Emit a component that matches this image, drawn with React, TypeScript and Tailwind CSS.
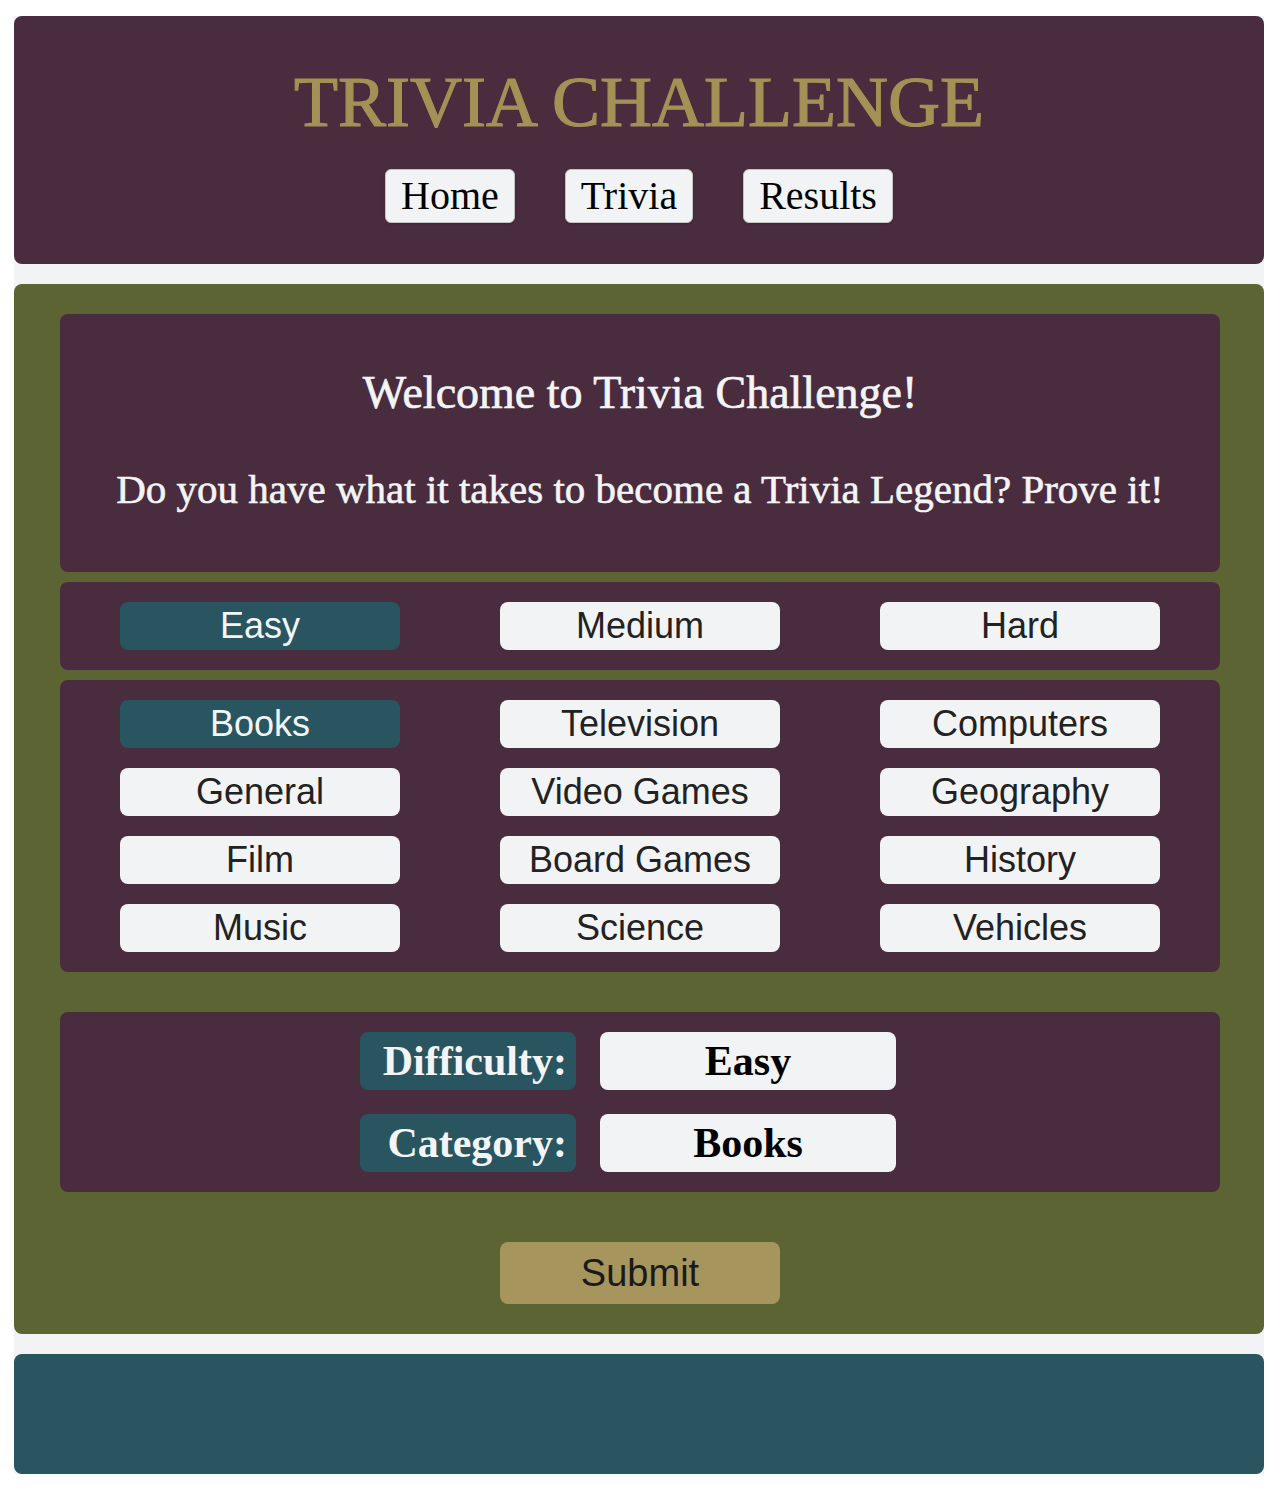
import { useState } from "react";

const difficulties = ["Easy", "Medium", "Hard"];
const categories = [
  "Books", "Television", "Computers",
  "General", "Video Games", "Geography",
  "Film", "Board Games", "History",
  "Music", "Science", "Vehicles",
];

const serif = "font-['Liberation_Serif',serif]";
const sans = "font-['Liberation_Sans',Arial,sans-serif]";

function OptionButton({ label, active, onClick }: { label: string; active: boolean; onClick: () => void }) {
  return (
    <button
      onClick={onClick}
      className={`${sans} h-[48px] w-[280px] rounded-lg text-[36px] leading-none ${
        active ? "bg-[#28555f] text-[#f3f4f6]" : "bg-[#f2f3f5] text-[#222]"
      }`}
    >
      {label}
    </button>
  );
}

export default function App() {
  const [difficulty, setDifficulty] = useState("Easy");
  const [category, setCategory] = useState("Books");

  return (
    <div className="w-full bg-white pt-4 pb-[30px] pl-[14px] pr-4">
      <div className="flex flex-col gap-5 bg-[#f2f3f5]">
        {/* header */}
        <header className="flex flex-col items-center rounded-lg bg-[#492c3d] pt-[50px] pb-[41px]">
          <h1 className={`${serif} text-[72px] leading-[72px] text-[#a39155] [-webkit-text-stroke:1.2px_#a39155]`}>
            TRIVIA CHALLENGE
          </h1>
          <nav className="mt-[31px] flex gap-[50px]">
            {["Home", "Trivia", "Results"].map((item) => (
              <a
                key={item}
                href="#"
                className={`${serif} flex h-[54px] items-center rounded-md border border-[#c4c4c4] bg-[#f2f3f5] px-[15px] text-[40px] leading-none text-black shadow-sm`}
              >
                {item}
              </a>
            ))}
          </nav>
        </header>

        {/* main */}
        <main className="flex flex-col rounded-lg bg-[#5c6434] pt-[30px] pb-[30px] pl-[46px] pr-[44px]">
          <section className="flex flex-col items-center rounded-lg bg-[#492c3d] pt-[56px] pb-[62px] text-[#f3f4f6]">
            <h2 className={`${serif} text-[46px] leading-[46px] [-webkit-text-stroke:0.7px_#f3f4f6]`}>
              Welcome to Trivia Challenge!
            </h2>
            <p className={`${serif} mt-[53px] text-[41px] leading-[41px] [-webkit-text-stroke:0.6px_#f3f4f6]`}>
              Do you have what it takes to become a Trivia Legend? Prove it!
            </p>
          </section>

          <section className="mt-[10px] flex justify-center gap-[100px] rounded-lg bg-[#492c3d] py-5">
            {difficulties.map((d) => (
              <OptionButton key={d} label={d} active={d === difficulty} onClick={() => setDifficulty(d)} />
            ))}
          </section>

          <section className="mt-[10px] grid grid-cols-[280px_280px_280px] justify-center gap-x-[100px] gap-y-5 rounded-lg bg-[#492c3d] py-5">
            {categories.map((c) => (
              <OptionButton key={c} label={c} active={c === category} onClick={() => setCategory(c)} />
            ))}
          </section>

          <section className="mt-[40px] grid grid-cols-[216px_296px] gap-x-6 gap-y-6 rounded-lg bg-[#492c3d] py-5 pl-[300px]">
            <div className={`${serif} flex h-[58px] items-center justify-end rounded-lg bg-[#28555f] pr-[9px] text-[42px] font-bold text-[#f3f4f6]`}>
              Difficulty:
            </div>
            <div className={`${serif} flex h-[58px] items-center justify-center rounded-lg bg-[#f2f3f5] text-[42px] font-bold text-black`}>
              {difficulty}
            </div>
            <div className={`${serif} flex h-[58px] items-center justify-end rounded-lg bg-[#28555f] pr-[9px] text-[42px] font-bold text-[#f3f4f6]`}>
              Category:
            </div>
            <div className={`${serif} flex h-[58px] items-center justify-center rounded-lg bg-[#f2f3f5] text-[42px] font-bold text-black`}>
              {category}
            </div>
          </section>

          <div className="mt-[50px] flex justify-center">
            <button className={`${sans} h-[62px] w-[280px] rounded-lg bg-[#a6955c] text-[38px] leading-none text-[#1a1a1a]`}>
              Submit
            </button>
          </div>
        </main>

        {/* footer */}
        <footer className="h-[120px] rounded-lg bg-[#28555f]" />
      </div>
    </div>
  );
}
